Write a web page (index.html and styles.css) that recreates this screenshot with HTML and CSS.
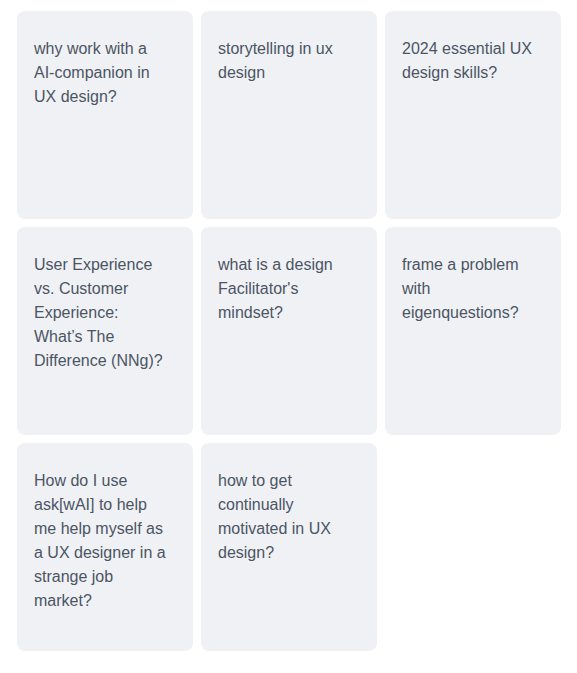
FILE: index.html
```html
<!DOCTYPE html>
<html lang="en">
<head>
  <meta charset="UTF-8">
  <meta name="viewport" content="width=device-width, initial-scale=1.0">
  <title>Prompts</title>
  <link rel="stylesheet" href="styles.css">
</head>
<body>
  <div class="prompt-grid">
    <div class="prompt-card">why work with a AI-companion in UX design?</div>
    <div class="prompt-card">storytelling in ux design</div>
    <div class="prompt-card">2024 essential UX design skills?</div>
    <div class="prompt-card">User Experience vs. Customer Experience: What’s The Difference (NNg)?</div>
    <div class="prompt-card">what is a design Facilitator's mindset?</div>
    <div class="prompt-card">frame a problem with eigenquestions?</div>
    <div class="prompt-card">How do I use ask[wAI] to help me help myself as a UX designer in a strange job market?</div>
    <div class="prompt-card">how to get continually motivated in UX design?</div>
  </div>
</body>
</html>
```

FILE: styles.css
```css
:root {
  --color-card: #f0f1f5;
  --color-text: #4b5563;
}

* {
  box-sizing: border-box;
}

body {
  margin: 0;
  padding: 11px 16px 0 17px;
  background-color: #fff;
  font-family: "Liberation Sans", Arial, sans-serif;
  color: var(--color-text);
}

.prompt-grid {
  display: grid;
  grid-template-columns: repeat(3, 176px);
  grid-auto-rows: 208px;
  gap: 8px;
}

.prompt-card {
  background-color: var(--color-card);
  border-radius: 8px;
  padding: 26px 23px 16px 17px;
  font-size: 16px;
  line-height: 24px;
}
```
